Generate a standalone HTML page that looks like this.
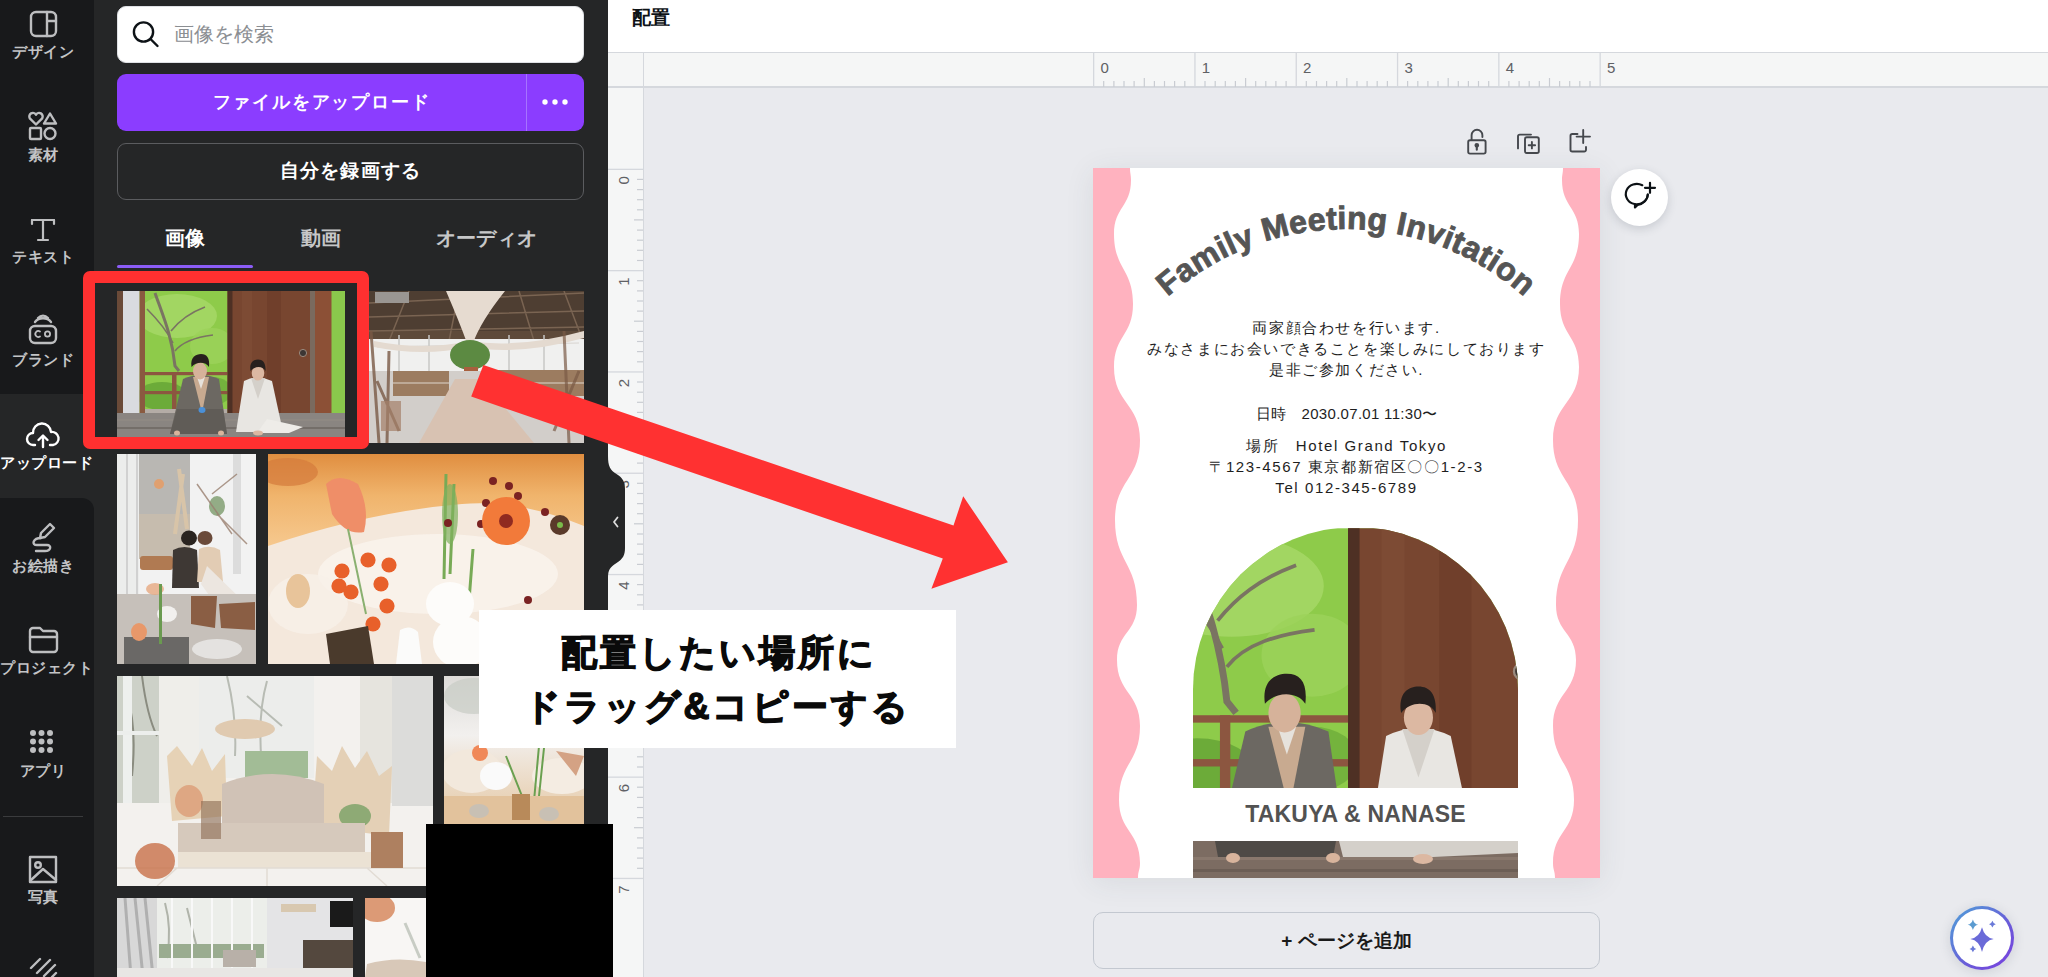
<!DOCTYPE html><html><head><meta charset="utf-8"><style>
*{margin:0;padding:0;box-sizing:border-box}
html,body{width:2048px;height:977px;overflow:hidden;background:#e9eaee;font-family:"Liberation Sans",sans-serif}
.a{position:absolute}
.nl{position:absolute;left:0;width:86px;text-align:center;color:#c3c4c6;font-size:15px;font-weight:bold;white-space:nowrap;line-height:16px;letter-spacing:0.5px}
.ph{position:absolute;overflow:hidden}
.ph div{position:absolute}
</style></head><body>
<div class="a" style="left:0;top:0;width:95px;height:977px;background:#252627"></div>
<div class="a" style="left:0;top:0;width:94px;height:394px;background:#18191b;border-bottom-right-radius:12px"></div>
<div class="a" style="left:0;top:498px;width:94px;height:479px;background:#18191b;border-top-right-radius:12px"></div>
<svg class="a" style="left:0;top:0" width="95" height="977" viewBox="0 0 95 977" fill="none" stroke="#bdbec0" stroke-width="2.4" stroke-linecap="round" stroke-linejoin="round">
<rect x="31" y="12" width="25" height="24" rx="5"/><path d="M47 12v24M47 21h9"/>
<path d="M36 124.5l-6.2-6.2a3.4 3.4 0 0 1 6.2-3.6a3.4 3.4 0 0 1 6.2 3.6z"/><path d="M50 113.5l6 10h-12z"/>
<rect x="30" y="128" width="11" height="11" rx="1"/><circle cx="50" cy="133.5" r="5.5"/>
<path d="M32 220h22M43 220v20M38 240h10" stroke-width="2.2"/><path d="M32 220v4M54 220v4" stroke-width="2.2"/>
<rect x="30" y="326" width="26" height="17" rx="5"/><path d="M35 322c4-5 12-5 16 0M38 318c3-3 7-3 10 0"/>
<path d="M40 331.5a3 3 0 1 0 0 5" stroke-width="1.8"/><circle cx="47.5" cy="334" r="2.6" stroke-width="1.8"/>
<path d="M35 445h-2a6 6 0 0 1 0-12a9 9 0 0 1 18-1a6.5 6.5 0 0 1 2 13h-3" stroke="#fff"/><path d="M43 447v-11M38.5 440l4.5-4.5l4.5 4.5" stroke="#fff"/>
<path d="M50 524l4 4-9 9-5 1 1-5z"/><path d="M41 538c-8 0-10 7-4 7h10c5 0 4 6-2 6h-9"/>
<path d="M30 631a3 3 0 0 1 3-3h7l3 3h11a3 3 0 0 1 3 3v15a3 3 0 0 1-3 3h-21a3 3 0 0 1-3-3z"/><path d="M30 637h27"/>
<path d="M30 857h26v25h-26z" stroke-width="2.4"/><circle cx="38" cy="865" r="2.8"/><path d="M31 880l12-11l13 11"/>
<path d="M31 968l9-9M37 973l13-13M44 976l11-11M52 977l4-4"/>
</svg>
<svg class="a" style="left:0;top:0" width="95" height="977"><g fill="#bdbec0"><circle cx="33.0" cy="733.0" r="3"/><circle cx="33.0" cy="741.5" r="3"/><circle cx="33.0" cy="750.0" r="3"/><circle cx="41.5" cy="733.0" r="3"/><circle cx="41.5" cy="741.5" r="3"/><circle cx="41.5" cy="750.0" r="3"/><circle cx="50.0" cy="733.0" r="3"/><circle cx="50.0" cy="741.5" r="3"/><circle cx="50.0" cy="750.0" r="3"/></g></svg>
<div class="a" style="left:3px;top:816px;width:80px;height:1px;background:#3a3b3d"></div>
<div class="nl" style="top:44px;color:#c3c4c6">デザイン</div>
<div class="nl" style="top:147px;color:#c3c4c6">素材</div>
<div class="nl" style="top:249px;color:#c3c4c6">テキスト</div>
<div class="nl" style="top:352px;color:#c3c4c6">ブランド</div>
<div class="nl" style="top:455px;color:#ffffff">アップロード</div>
<div class="nl" style="top:558px;color:#c3c4c6">お絵描き</div>
<div class="nl" style="top:660px;color:#c3c4c6">プロジェクト</div>
<div class="nl" style="top:763px;color:#c3c4c6">アプリ</div>
<div class="nl" style="top:889px;color:#c3c4c6">写真</div>
<div class="a" style="left:95px;top:0;width:513px;height:977px;background:#252627"></div>
<div class="a" style="left:117px;top:6px;width:467px;height:57px;background:#fff;border-radius:9px;border:1px solid #dfe1e5"></div>
<svg class="a" style="left:125px;top:14px" width="40" height="40" fill="none" stroke="#0d1216" stroke-width="2.4" stroke-linecap="round"><circle cx="18.5" cy="18" r="9.6"/><path d="M25.5 25l7 7"/></svg>
<div class="a" style="left:174px;top:23px;font-size:19.5px;color:#8b8e92;line-height:22px">画像を検索</div>
<div class="a" style="left:117px;top:74px;width:467px;height:57px;background:#8b3dff;border-radius:9px"></div>
<div class="a" style="left:526px;top:74px;width:1px;height:57px;background:#a673ff"></div>
<div class="a" style="left:117px;top:91px;width:409px;text-align:center;font-size:18px;font-weight:bold;color:#fff;line-height:22px;letter-spacing:1.8px">ファイルをアップロード</div>
<svg class="a" style="left:540px;top:95px" width="32" height="14" fill="#fff"><circle cx="5" cy="7" r="2.7"/><circle cx="15" cy="7" r="2.7"/><circle cx="25" cy="7" r="2.7"/></svg>
<div class="a" style="left:117px;top:143px;width:467px;height:57px;border:1px solid #5b5c5f;border-radius:9px"></div>
<div class="a" style="left:117px;top:160px;width:467px;text-align:center;font-size:19px;font-weight:bold;color:#fff;line-height:22px;letter-spacing:1.2px">自分を録画する</div>
<div class="a" style="left:117px;top:227px;width:136px;text-align:center;font-size:20px;font-weight:bold;color:#fff;line-height:22px">画像</div>
<div class="a" style="left:253px;top:227px;width:136px;text-align:center;font-size:20px;font-weight:bold;color:#c6c7c8;line-height:22px">動画</div>
<div class="a" style="left:389px;top:227px;width:195px;text-align:center;font-size:20px;font-weight:bold;color:#c6c7c8;line-height:22px;letter-spacing:0.4px">オーディオ</div>
<div class="a" style="left:117px;top:265px;width:136px;height:3px;background:#8b5cf6;border-radius:2px"></div>
<svg class="a" style="left:117px;top:291px" width="228" height="146" viewBox="0 0 228 146"><rect x="0" y="0" width="228" height="146" fill="#8ecb4a"/><ellipse cx="60" cy="25" rx="40" ry="22" fill="#a8d868" opacity=".8"/><ellipse cx="95" cy="55" rx="22" ry="18" fill="#9cd25a" opacity=".8"/><ellipse cx="45" cy="105" rx="25" ry="14" fill="#5e9c32" opacity=".7"/><ellipse cx="95" cy="100" rx="20" ry="14" fill="#6aa838" opacity=".7"/><path d="M38 2 C46 25 55 45 58 75 L62 80" stroke="#7a7462" stroke-width="3" fill="none"/><path d="M30 18 C40 28 50 40 56 52 M54 40 C62 30 72 22 88 16 M58 60 C66 50 80 46 96 44" stroke="#7a7462" stroke-width="1.6" fill="none"/><rect x="0" y="0" width="6" height="146" fill="#6a4a38"/><rect x="6" y="0" width="16.6" height="124" fill="#d9dbdf"/><rect x="22.6" y="0" width="5.4" height="124" fill="#8a5a40"/><rect x="28" y="81" width="82.5" height="3.2" fill="#8c5640"/><rect x="28" y="100" width="82.5" height="3.2" fill="#8c5640"/><rect x="55" y="81" width="4.5" height="40" fill="#8c5640"/><rect x="28" y="118" width="82.5" height="7" fill="#b4aca6"/><rect x="110.5" y="0" width="84" height="126" fill="#784630"/><rect x="125" y="0" width="10" height="126" fill="#7e4c36" opacity=".8"/><rect x="150" y="0" width="14" height="126" fill="#6a3a28" opacity=".6"/><rect x="110.5" y="0" width="5" height="126" fill="#4e3024"/><circle cx="186" cy="62" r="3.6" fill="#3c3634" stroke="#9a8a7e" stroke-width="1"/><rect x="193" y="0" width="5.4" height="126" fill="#7a6a5e"/><rect x="198" y="0" width="16.7" height="127" fill="#8c5036"/><rect x="214.7" y="0" width="13.3" height="127" fill="#8ac84c"/><rect x="0" y="122" width="228" height="24" fill="#8a8581"/><rect x="0" y="128" width="228" height="2" fill="#928c86" opacity=".6"/><rect x="0" y="136" width="228" height="2" fill="#665f5a" opacity=".6"/><path d="M66 88 Q84 80 102 88 L110 143 L53 143 Z" fill="#6c6862"/><path d="M60 118 L106 118 L110 143 L53 143 Z" fill="#605c57"/><path d="M76 86 L92 86 L85 122 Z" fill="#c8aa90"/><path d="M80 86 L88 86 L84 98 Z" fill="#e6e2dc"/><ellipse cx="85" cy="119" rx="3.5" ry="3" fill="#4a90d8"/><ellipse cx="60" cy="142" rx="3" ry="2.5" fill="#d8b49c"/><ellipse cx="104" cy="142" rx="3" ry="2.5" fill="#d8b49c"/><ellipse cx="83" cy="80" rx="7" ry="8.5" fill="#d6b29a"/><path d="M74.5 76 C73 66 79 63 84 63 C90 63 93 67 92 76 C89 71 80 70 74.5 76 Z" fill="#27201e"/><path d="M127 90 Q141 83 155 90 L166 141 L119 141 Z" fill="#e8e6e2"/><path d="M150 128 L186 136 L172 142 L140 142 Z" fill="#eeece8"/><path d="M134 87 L148 87 L141 108 Z" fill="#d4d0ca"/><ellipse cx="141" cy="142" rx="5" ry="2.5" fill="#dcb8a2"/><ellipse cx="141" cy="82" rx="6.3" ry="7.6" fill="#dcb8a2"/><path d="M133.5 80 C132 71 137 68.5 141 68.5 C146 68.5 149 72 148.5 80 C146 75 138 74.5 133.5 80 Z" fill="#27201e"/></svg>
<svg class="a" style="left:369px;top:291px" width="215" height="152" viewBox="0 0 215 152"><rect width="215" height="152" fill="#cfc9c3"/><rect width="215" height="50" fill="#4e3e32"/><rect y="40" width="215" height="12" fill="#5e4a3a"/><path d="M0 12 L215 2 M0 26 L215 20 M0 40 L215 36 M40 0 L20 50 M90 0 L80 50 M150 0 L165 50 M195 0 L212 45" stroke="#7a6452" stroke-width="1.5"/><rect x="6" y="1" width="34" height="11" fill="#9a9692"/><rect x="0" y="48" width="215" height="36" fill="#f0f0ef"/><path d="M8 56 L210 52" stroke="#d8d4d0" stroke-width="1"/><path d="M30 44 V84 M60 44 V84 M140 44 V84 M175 44 V84" stroke="#c8c8c6" stroke-width="1.5"/><path d="M77 0 L136 0 Q112 30 104 52 L98 52 Q90 30 77 0 Z" fill="#e6dbd0"/><path d="M5 50 Q55 60 100 50 Q150 58 215 40 L215 47 Q150 65 100 56 Q55 66 5 56 Z" fill="#e4dad0"/><ellipse cx="101" cy="64" rx="20" ry="15" fill="#5c8a42"/><rect x="95" y="76" width="14" height="15" fill="#a8603e"/><rect x="0" y="80" width="215" height="72" fill="#d2ceca"/><rect x="24" y="80" width="56" height="25" fill="#9c7c60"/><rect x="126" y="79" width="89" height="26" fill="#9c7c60"/><path d="M24 92 H80 M126 92 H215" stroke="#c8b8a8" stroke-width="1.5"/><path d="M86 88 L112 88 L165 152 L50 152 Z" fill="#d8c2b2"/><path d="M2 40 L10 152 M20 60 L18 152 M8 90 L30 140" stroke="#7a5a46" stroke-width="3" opacity=".8"/><path d="M195 40 L200 152 M210 80 L185 140" stroke="#7a5a46" stroke-width="3" opacity=".7"/><rect x="12" y="110" width="20" height="30" fill="#a4806a" opacity=".7"/></svg>
<svg class="a" style="left:117px;top:454px" width="139" height="210" viewBox="0 0 139 210"><rect width="139" height="210" fill="#f2f2f2"/><rect x="0" y="0" width="22" height="150" fill="#ecedec"/><path d="M10 0 V150 M20 0 V150" stroke="#c8c8c8" stroke-width="1.5"/><rect x="22" y="0" width="51" height="100" fill="#b9b7b3"/><rect x="22" y="60" width="51" height="45" fill="#c6bcae"/><rect x="116" y="0" width="8" height="120" fill="#dcdcdc"/><path d="M62 15 L70 75 M66 20 L58 80" stroke="#d8c4a8" stroke-width="4"/><ellipse cx="42" cy="30" rx="5" ry="5" fill="#e0a070"/><ellipse cx="100" cy="52" rx="8" ry="10" fill="#7a9a6a" opacity=".8"/><path d="M80 30 L115 80 M95 40 L120 20 M100 60 L130 90" stroke="#9a8070" stroke-width="1.5" opacity=".8"/><rect x="23" y="102" width="33" height="14" rx="3" fill="#b07a52"/><path d="M56 96 Q67 90 80 96 L82 134 L55 134 Z" fill="#3e3834"/><ellipse cx="72" cy="84" rx="8" ry="7.5" fill="#2a2420"/><ellipse cx="88" cy="84" rx="7.5" ry="7" fill="#6a4a3a"/><path d="M82 95 Q93 90 103 96 L106 128 L80 128 Z" fill="#e2ccb4"/><path d="M90 112 L129 150 L100 152 L84 130 Z" fill="#ece6e0"/><rect x="0" y="140" width="139" height="70" fill="#c6c0ba"/><path d="M74 142 L100 142 L98 174 L74 170 Z M102 150 L138 148 L138 176 L104 174 Z" fill="#8a5e44"/><rect x="7" y="183" width="65" height="27" fill="#6a6866"/><ellipse cx="22" cy="178" rx="8" ry="9" fill="#e8986a"/><ellipse cx="50" cy="160" rx="10" ry="8" fill="#f2f0ee"/><ellipse cx="100" cy="195" rx="25" ry="10" fill="#e4e2e0"/><ellipse cx="38" cy="135" rx="9" ry="6" fill="#e6a880" opacity=".8"/><rect x="42" y="130" width="3" height="60" fill="#6a9a50"/></svg>
<svg class="a" style="left:268px;top:454px" width="316" height="210" viewBox="0 0 316 210"><defs><linearGradient id="og" x1="0" y1="0" x2="0" y2="1"><stop offset="0" stop-color="#e08e40"/><stop offset=".45" stop-color="#f0b46c"/><stop offset="1" stop-color="#f6c88e"/></linearGradient></defs><rect width="316" height="210" fill="#f4e8dc"/><path d="M0 0 H316 V72 Q250 45 194 50 Q100 58 0 92 Z" fill="url(#og)"/><ellipse cx="20" cy="18" rx="30" ry="14" fill="#d47a3c" opacity=".7"/><ellipse cx="170" cy="120" rx="120" ry="40" fill="#faf4ee" opacity=".8"/><ellipse cx="40" cy="150" rx="40" ry="30" fill="#f8f0e8" opacity=".8"/><path d="M58 30 Q70 18 90 30 Q102 55 96 78 Q78 82 64 60 Z" fill="#ef8e68"/><path d="M80 75 L98 160" stroke="#8ab070" stroke-width="2"/><path d="M178 20 L176 125 M186 30 L182 120 M205 95 L200 160" stroke="#78aa56" stroke-width="3"/><ellipse cx="182" cy="60" rx="8" ry="30" fill="#7fb05e" opacity=".7"/><circle cx="225" cy="27" r="4" fill="#7a2222"/><circle cx="241" cy="32" r="4" fill="#7a2222"/><circle cx="250" cy="42" r="4" fill="#7a2222"/><circle cx="218" cy="49" r="4" fill="#7a2222"/><circle cx="213" cy="70" r="4" fill="#7a2222"/><circle cx="180" cy="69" r="4" fill="#7a2222"/><circle cx="277" cy="58" r="4" fill="#7a2222"/><circle cx="260" cy="146" r="4" fill="#7a2222"/><circle cx="238" cy="67" r="24" fill="#f27a3a"/><circle cx="238" cy="67" r="7" fill="#902a20"/><circle cx="292" cy="71" r="10" fill="#5a3a2a"/><circle cx="292" cy="71" r="3" fill="#7aba4a"/><circle cx="100" cy="106" r="7.6" fill="#e8602a"/><circle cx="121" cy="111" r="7.6" fill="#e8602a"/><circle cx="74" cy="117" r="7.6" fill="#e8602a"/><circle cx="71" cy="132" r="7.6" fill="#e8602a"/><circle cx="83" cy="138" r="7.6" fill="#e8602a"/><circle cx="113" cy="130" r="7.6" fill="#e8602a"/><circle cx="119" cy="152" r="7.6" fill="#e8602a"/><circle cx="105" cy="170" r="7.6" fill="#e8602a"/><ellipse cx="30" cy="137" rx="12" ry="17" fill="#e8c49a"/><path d="M58 180 L100 172 L106 210 L62 210 Z" fill="#4a3a2c"/><path d="M132 176 Q142 170 150 178 L154 210 L128 210 Z" fill="#fbfbfa"/><ellipse cx="182" cy="150" rx="24" ry="22" fill="#fdfcfa"/><ellipse cx="193" cy="188" rx="28" ry="26" fill="#fdfcfa"/></svg>
<svg class="a" style="left:117px;top:676px" width="316" height="210" viewBox="0 0 316 210"><rect width="316" height="210" fill="#f3f1ee"/><rect x="0" y="0" width="42" height="127" fill="#cdd1c8"/><path d="M25 0 Q30 40 40 60 M10 20 Q20 50 15 100" stroke="#8a8c80" stroke-width="2" fill="none"/><rect x="6" y="0" width="9" height="127" fill="#eef0ee"/><rect x="0" y="55" width="42" height="4" fill="#eceeec"/><rect x="42" y="0" width="40" height="127" fill="#efeeea"/><rect x="82" y="0" width="115" height="102" fill="#ecedeb"/><path d="M110 0 Q120 40 118 80 M150 5 Q140 40 145 90 M130 20 L165 50" stroke="#b8bcb4" stroke-width="2" fill="none"/><rect x="128" y="75" width="63" height="27" fill="#a2bc96"/><rect x="243" y="0" width="32" height="127" fill="#e6e4de"/><rect x="275" y="0" width="41" height="130" fill="#dcdcda"/><ellipse cx="128" cy="53" rx="30" ry="10" fill="#e0cab0"/><path d="M50 80 L60 70 L75 90 L85 72 L95 95 L108 78 L110 140 L55 145 Z" fill="#e6d2b6"/><ellipse cx="72" cy="125" rx="14" ry="16" fill="#d88a60" opacity=".6"/><path d="M195 150 L200 80 L215 95 L225 70 L238 92 L250 75 L262 100 L275 90 L272 160 Z" fill="#e4d0b6"/><ellipse cx="238" cy="140" rx="16" ry="12" fill="#6a9a5a" opacity=".7"/><path d="M105 108 Q155 88 207 108 L207 147 L105 147 Z" fill="#d0c2b6"/><rect x="61" y="147" width="187" height="29" fill="#d6c9bc"/><rect x="61" y="176" width="200" height="16" fill="#ebe2d4"/><path d="M0 192 H316 M60 192 L40 210 M150 192 L150 210 M250 192 L270 210" stroke="#e2dcd4" stroke-width="1.5"/><ellipse cx="38" cy="185" rx="20" ry="18" fill="#c87048" opacity=".8"/><rect x="254" y="156" width="32" height="36" fill="#ae8060"/><rect x="84" y="125" width="20" height="38" fill="#8a6a52" opacity=".6"/></svg>
<svg class="a" style="left:444px;top:676px" width="140" height="148" viewBox="0 0 140 148"><defs><linearGradient id="g6" x1="0" y1="0" x2="0" y2="1"><stop offset="0" stop-color="#dddbd8"/><stop offset=".4" stop-color="#f2f0ee"/><stop offset=".6" stop-color="#eee2d4"/><stop offset="1" stop-color="#e4c8a4"/></linearGradient></defs><rect width="140" height="148" fill="url(#g6)"/><ellipse cx="30" cy="20" rx="30" ry="18" fill="#c8ccc4" opacity=".7"/><ellipse cx="28" cy="95" rx="30" ry="22" fill="#f2e8dc"/><ellipse cx="118" cy="100" rx="30" ry="18" fill="#f4ece2"/><path d="M112 75 L140 80 L132 100 Z" fill="#d4a284"/><circle cx="36" cy="77" r="8" fill="#f08858"/><ellipse cx="52" cy="100" rx="16" ry="14" fill="#fafafa"/><path d="M62 80 L78 120 M95 70 L90 125 M100 72 L95 120" stroke="#6aa050" stroke-width="2"/><rect x="0" y="120" width="140" height="28" fill="#e2c29c"/><rect x="68" y="118" width="18" height="26" fill="#b88a5a"/><ellipse cx="35" cy="135" rx="10" ry="7" fill="#c8c0b4"/><ellipse cx="105" cy="138" rx="10" ry="7" fill="#c8c0b4"/></svg>
<svg class="a" style="left:117px;top:898px" width="236" height="79" viewBox="0 0 236 79"><rect width="236" height="79" fill="#f2f2f2"/><rect x="0" y="0" width="40" height="79" fill="#d8d8d8"/><path d="M8 0 L14 79 M18 0 L26 79 M28 0 L36 79" stroke="#b0b0b0" stroke-width="3"/><rect x="40" y="0" width="110" height="79" fill="#eceeea"/><path d="M48 5 Q55 30 50 60 M70 10 L80 50" stroke="#b0b4aa" stroke-width="2" fill="none"/><rect x="42" y="46" width="105" height="14" fill="#9aac90"/><path d="M55 0 V79 M75 0 V79 M95 0 V79 M115 0 V79 M135 0 V79" stroke="#f8f8f8" stroke-width="2"/><rect x="150" y="0" width="86" height="79" fill="#e4e4e6"/><rect x="213" y="3" width="23" height="26" fill="#1a1a1a"/><rect x="164" y="6" width="35" height="8" fill="#d8c8b0"/><rect x="186" y="42" width="50" height="30" fill="#54483e"/><rect x="106" y="52" width="33" height="17" fill="#b8b0a8"/><rect x="0" y="70" width="236" height="9" fill="#e8e6e4"/></svg>
<svg class="a" style="left:365px;top:898px" width="61" height="79" viewBox="0 0 61 79"><rect width="61" height="79" fill="#f8f6f4"/><ellipse cx="12" cy="10" rx="18" ry="14" fill="#dc9a76"/><path d="M40 25 L55 60" stroke="#c8ccc4" stroke-width="3"/><path d="M0 79 L2 66 Q30 58 61 64 L61 79 Z" fill="#d8c8b8"/></svg>
<div class="a" style="left:83px;top:271px;width:286px;height:178px;border:12px solid #ff3030;border-radius:7px"></div>
<div class="a" style="left:608px;top:0;width:1440px;height:52px;background:#fff"></div>
<div class="a" style="left:632px;top:6px;font-size:19px;font-weight:bold;color:#0d1216;line-height:24px">配置</div>
<div class="a" style="left:608px;top:52px;width:1440px;height:36px;background:#f5f6f6;border-top:1px solid #d5d8dd;border-bottom:2px solid #d5d8dd"></div>
<div class="a" style="left:608px;top:88px;width:36px;height:889px;background:#f5f6f6;border-right:1px solid #d5d8dd"></div>
<div class="a" style="left:643px;top:52px;width:1px;height:36px;background:#d5d8dd"></div>
<svg class="a" style="left:0;top:0" width="2048" height="977" fill="none"><rect x="1093.0" y="52" width="1.3" height="36" fill="#d5d8dd"/><text x="1100.5" y="73" font-family="Liberation Sans" font-size="15" fill="#5f6165">0</text><rect x="1103.1" y="81" width="1.2" height="6" fill="#c9ccd2"/><rect x="1113.3" y="81" width="1.2" height="6" fill="#c9ccd2"/><rect x="1123.4" y="81" width="1.2" height="6" fill="#c9ccd2"/><rect x="1133.5" y="81" width="1.2" height="6" fill="#c9ccd2"/><rect x="1143.7" y="78" width="1.2" height="9" fill="#c9ccd2"/><rect x="1153.8" y="81" width="1.2" height="6" fill="#c9ccd2"/><rect x="1163.9" y="81" width="1.2" height="6" fill="#c9ccd2"/><rect x="1174.0" y="81" width="1.2" height="6" fill="#c9ccd2"/><rect x="1184.2" y="81" width="1.2" height="6" fill="#c9ccd2"/><rect x="1194.3" y="52" width="1.3" height="36" fill="#d5d8dd"/><text x="1201.8" y="73" font-family="Liberation Sans" font-size="15" fill="#5f6165">1</text><rect x="1204.4" y="81" width="1.2" height="6" fill="#c9ccd2"/><rect x="1214.6" y="81" width="1.2" height="6" fill="#c9ccd2"/><rect x="1224.7" y="81" width="1.2" height="6" fill="#c9ccd2"/><rect x="1234.8" y="81" width="1.2" height="6" fill="#c9ccd2"/><rect x="1245.0" y="78" width="1.2" height="9" fill="#c9ccd2"/><rect x="1255.1" y="81" width="1.2" height="6" fill="#c9ccd2"/><rect x="1265.2" y="81" width="1.2" height="6" fill="#c9ccd2"/><rect x="1275.3" y="81" width="1.2" height="6" fill="#c9ccd2"/><rect x="1285.5" y="81" width="1.2" height="6" fill="#c9ccd2"/><rect x="1295.6" y="52" width="1.3" height="36" fill="#d5d8dd"/><text x="1303.1" y="73" font-family="Liberation Sans" font-size="15" fill="#5f6165">2</text><rect x="1305.7" y="81" width="1.2" height="6" fill="#c9ccd2"/><rect x="1315.9" y="81" width="1.2" height="6" fill="#c9ccd2"/><rect x="1326.0" y="81" width="1.2" height="6" fill="#c9ccd2"/><rect x="1336.1" y="81" width="1.2" height="6" fill="#c9ccd2"/><rect x="1346.2" y="78" width="1.2" height="9" fill="#c9ccd2"/><rect x="1356.4" y="81" width="1.2" height="6" fill="#c9ccd2"/><rect x="1366.5" y="81" width="1.2" height="6" fill="#c9ccd2"/><rect x="1376.6" y="81" width="1.2" height="6" fill="#c9ccd2"/><rect x="1386.8" y="81" width="1.2" height="6" fill="#c9ccd2"/><rect x="1396.9" y="52" width="1.3" height="36" fill="#d5d8dd"/><text x="1404.4" y="73" font-family="Liberation Sans" font-size="15" fill="#5f6165">3</text><rect x="1407.0" y="81" width="1.2" height="6" fill="#c9ccd2"/><rect x="1417.2" y="81" width="1.2" height="6" fill="#c9ccd2"/><rect x="1427.3" y="81" width="1.2" height="6" fill="#c9ccd2"/><rect x="1437.4" y="81" width="1.2" height="6" fill="#c9ccd2"/><rect x="1447.6" y="78" width="1.2" height="9" fill="#c9ccd2"/><rect x="1457.7" y="81" width="1.2" height="6" fill="#c9ccd2"/><rect x="1467.8" y="81" width="1.2" height="6" fill="#c9ccd2"/><rect x="1477.9" y="81" width="1.2" height="6" fill="#c9ccd2"/><rect x="1488.1" y="81" width="1.2" height="6" fill="#c9ccd2"/><rect x="1498.2" y="52" width="1.3" height="36" fill="#d5d8dd"/><text x="1505.7" y="73" font-family="Liberation Sans" font-size="15" fill="#5f6165">4</text><rect x="1508.3" y="81" width="1.2" height="6" fill="#c9ccd2"/><rect x="1518.5" y="81" width="1.2" height="6" fill="#c9ccd2"/><rect x="1528.6" y="81" width="1.2" height="6" fill="#c9ccd2"/><rect x="1538.7" y="81" width="1.2" height="6" fill="#c9ccd2"/><rect x="1548.9" y="78" width="1.2" height="9" fill="#c9ccd2"/><rect x="1559.0" y="81" width="1.2" height="6" fill="#c9ccd2"/><rect x="1569.1" y="81" width="1.2" height="6" fill="#c9ccd2"/><rect x="1579.2" y="81" width="1.2" height="6" fill="#c9ccd2"/><rect x="1589.4" y="81" width="1.2" height="6" fill="#c9ccd2"/><rect x="1599.5" y="52" width="1.3" height="36" fill="#d5d8dd"/><text x="1607.0" y="73" font-family="Liberation Sans" font-size="15" fill="#5f6165">5</text><rect x="608" y="168.7" width="36" height="1.3" fill="#d5d8dd"/><text transform="translate(629 176.2) rotate(-90)" text-anchor="end" font-family="Liberation Sans" font-size="15" fill="#5f6165">0</text><rect x="637" y="178.8" width="6" height="1.2" fill="#c9ccd2"/><rect x="637" y="189.0" width="6" height="1.2" fill="#c9ccd2"/><rect x="637" y="199.1" width="6" height="1.2" fill="#c9ccd2"/><rect x="637" y="209.2" width="6" height="1.2" fill="#c9ccd2"/><rect x="634" y="219.3" width="9" height="1.2" fill="#c9ccd2"/><rect x="637" y="229.5" width="6" height="1.2" fill="#c9ccd2"/><rect x="637" y="239.6" width="6" height="1.2" fill="#c9ccd2"/><rect x="637" y="249.7" width="6" height="1.2" fill="#c9ccd2"/><rect x="637" y="259.9" width="6" height="1.2" fill="#c9ccd2"/><rect x="608" y="270.0" width="36" height="1.3" fill="#d5d8dd"/><text transform="translate(629 277.5) rotate(-90)" text-anchor="end" font-family="Liberation Sans" font-size="15" fill="#5f6165">1</text><rect x="637" y="280.1" width="6" height="1.2" fill="#c9ccd2"/><rect x="637" y="290.3" width="6" height="1.2" fill="#c9ccd2"/><rect x="637" y="300.4" width="6" height="1.2" fill="#c9ccd2"/><rect x="637" y="310.5" width="6" height="1.2" fill="#c9ccd2"/><rect x="634" y="320.6" width="9" height="1.2" fill="#c9ccd2"/><rect x="637" y="330.8" width="6" height="1.2" fill="#c9ccd2"/><rect x="637" y="340.9" width="6" height="1.2" fill="#c9ccd2"/><rect x="637" y="351.0" width="6" height="1.2" fill="#c9ccd2"/><rect x="637" y="361.2" width="6" height="1.2" fill="#c9ccd2"/><rect x="608" y="371.3" width="36" height="1.3" fill="#d5d8dd"/><text transform="translate(629 378.8) rotate(-90)" text-anchor="end" font-family="Liberation Sans" font-size="15" fill="#5f6165">2</text><rect x="637" y="381.4" width="6" height="1.2" fill="#c9ccd2"/><rect x="637" y="391.6" width="6" height="1.2" fill="#c9ccd2"/><rect x="637" y="401.7" width="6" height="1.2" fill="#c9ccd2"/><rect x="637" y="411.8" width="6" height="1.2" fill="#c9ccd2"/><rect x="634" y="421.9" width="9" height="1.2" fill="#c9ccd2"/><rect x="637" y="432.1" width="6" height="1.2" fill="#c9ccd2"/><rect x="637" y="442.2" width="6" height="1.2" fill="#c9ccd2"/><rect x="637" y="452.3" width="6" height="1.2" fill="#c9ccd2"/><rect x="637" y="462.5" width="6" height="1.2" fill="#c9ccd2"/><rect x="608" y="472.6" width="36" height="1.3" fill="#d5d8dd"/><text transform="translate(629 480.1) rotate(-90)" text-anchor="end" font-family="Liberation Sans" font-size="15" fill="#5f6165">3</text><rect x="637" y="482.7" width="6" height="1.2" fill="#c9ccd2"/><rect x="637" y="492.9" width="6" height="1.2" fill="#c9ccd2"/><rect x="637" y="503.0" width="6" height="1.2" fill="#c9ccd2"/><rect x="637" y="513.1" width="6" height="1.2" fill="#c9ccd2"/><rect x="634" y="523.2" width="9" height="1.2" fill="#c9ccd2"/><rect x="637" y="533.4" width="6" height="1.2" fill="#c9ccd2"/><rect x="637" y="543.5" width="6" height="1.2" fill="#c9ccd2"/><rect x="637" y="553.6" width="6" height="1.2" fill="#c9ccd2"/><rect x="637" y="563.8" width="6" height="1.2" fill="#c9ccd2"/><rect x="608" y="573.9" width="36" height="1.3" fill="#d5d8dd"/><text transform="translate(629 581.4) rotate(-90)" text-anchor="end" font-family="Liberation Sans" font-size="15" fill="#5f6165">4</text><rect x="637" y="584.0" width="6" height="1.2" fill="#c9ccd2"/><rect x="637" y="594.2" width="6" height="1.2" fill="#c9ccd2"/><rect x="637" y="604.3" width="6" height="1.2" fill="#c9ccd2"/><rect x="637" y="614.4" width="6" height="1.2" fill="#c9ccd2"/><rect x="634" y="624.5" width="9" height="1.2" fill="#c9ccd2"/><rect x="637" y="634.7" width="6" height="1.2" fill="#c9ccd2"/><rect x="637" y="644.8" width="6" height="1.2" fill="#c9ccd2"/><rect x="637" y="654.9" width="6" height="1.2" fill="#c9ccd2"/><rect x="637" y="665.1" width="6" height="1.2" fill="#c9ccd2"/><rect x="608" y="675.2" width="36" height="1.3" fill="#d5d8dd"/><text transform="translate(629 682.7) rotate(-90)" text-anchor="end" font-family="Liberation Sans" font-size="15" fill="#5f6165">5</text><rect x="637" y="685.3" width="6" height="1.2" fill="#c9ccd2"/><rect x="637" y="695.5" width="6" height="1.2" fill="#c9ccd2"/><rect x="637" y="705.6" width="6" height="1.2" fill="#c9ccd2"/><rect x="637" y="715.7" width="6" height="1.2" fill="#c9ccd2"/><rect x="634" y="725.9" width="9" height="1.2" fill="#c9ccd2"/><rect x="637" y="736.0" width="6" height="1.2" fill="#c9ccd2"/><rect x="637" y="746.1" width="6" height="1.2" fill="#c9ccd2"/><rect x="637" y="756.2" width="6" height="1.2" fill="#c9ccd2"/><rect x="637" y="766.4" width="6" height="1.2" fill="#c9ccd2"/><rect x="608" y="776.5" width="36" height="1.3" fill="#d5d8dd"/><text transform="translate(629 784.0) rotate(-90)" text-anchor="end" font-family="Liberation Sans" font-size="15" fill="#5f6165">6</text><rect x="637" y="786.6" width="6" height="1.2" fill="#c9ccd2"/><rect x="637" y="796.8" width="6" height="1.2" fill="#c9ccd2"/><rect x="637" y="806.9" width="6" height="1.2" fill="#c9ccd2"/><rect x="637" y="817.0" width="6" height="1.2" fill="#c9ccd2"/><rect x="634" y="827.1" width="9" height="1.2" fill="#c9ccd2"/><rect x="637" y="837.3" width="6" height="1.2" fill="#c9ccd2"/><rect x="637" y="847.4" width="6" height="1.2" fill="#c9ccd2"/><rect x="637" y="857.5" width="6" height="1.2" fill="#c9ccd2"/><rect x="637" y="867.7" width="6" height="1.2" fill="#c9ccd2"/><rect x="608" y="877.8" width="36" height="1.3" fill="#d5d8dd"/><text transform="translate(629 885.3) rotate(-90)" text-anchor="end" font-family="Liberation Sans" font-size="15" fill="#5f6165">7</text></svg>
<svg class="a" style="left:600px;top:456px" width="40" height="122"><path d="M8 0 C8 10 10 14 16.5 18 C23 22 25 26 25 33 L25 92 C25 99 23 103 16.5 107 C10 111 8 114 8 122 Z" fill="#252627"/><path d="M17.5 61.5l-3.5 4.5l3.5 4.5" stroke="#ddd" stroke-width="1.8" fill="none" stroke-linecap="round" stroke-linejoin="round"/></svg>
<div class="a" style="left:1093px;top:168px;width:507px;height:710px;background:#fff;box-shadow:0 4px 28px rgba(60,64,80,.09)"></div>
<svg class="a" style="left:0;top:0" width="2048" height="977"><path d="M1093 168 L1130 168 C1130 174.0 1131 174.0 1131 180 C1131 207.0 1114 207.0 1114 234 C1114 269.0 1133 269.0 1133 304 C1133 335.5 1114 335.5 1114 367 C1114 403.5 1140 403.5 1140 440 C1140 480.0 1115 480.0 1115 520 C1115 562.5 1137 562.5 1137 605 C1137 632.5 1117 632.5 1117 660 C1117 693.0 1140 693.0 1140 726 C1140 763.0 1119 763.0 1119 800 C1119 831.5 1140 831.5 1140 863 C1140 870.5 1138 870.5 1138 878 L1093 878 Z" fill="#ffb2bf"/><path d="M1600.0 168 L1563.0 168 C1563.0 174.0 1562.0 174.0 1562.0 180 C1562.0 207.0 1579.0 207.0 1579.0 234 C1579.0 269.0 1560.0 269.0 1560.0 304 C1560.0 335.5 1579.0 335.5 1579.0 367 C1579.0 403.5 1553.0 403.5 1553.0 440 C1553.0 480.0 1578.0 480.0 1578.0 520 C1578.0 562.5 1556.0 562.5 1556.0 605 C1556.0 632.5 1576.0 632.5 1576.0 660 C1576.0 693.0 1553.0 693.0 1553.0 726 C1553.0 763.0 1574.0 763.0 1574.0 800 C1574.0 831.5 1553.0 831.5 1553.0 863 C1553.0 870.5 1555.0 870.5 1555.0 878 L1600.0 878 Z" fill="#ffb2bf"/></svg>
<svg class="a" style="left:0;top:0" width="2048" height="977"><defs><path id="arc" d="M1346 497 m-268 0 a268 268 0 0 1 536 0"/></defs><text font-family="Liberation Sans" font-weight="bold" font-size="32" fill="#555555" stroke="#555555" stroke-width="0.9" letter-spacing="0.3" text-anchor="middle"><textPath href="#arc" startOffset="50%">Family Meeting Invitation</textPath></text></svg>
<div style="position:absolute;left:1093px;width:507px;text-align:center;color:#1e1e1e;font-size:15px;line-height:21px;white-space:nowrap;top:317px;letter-spacing:1.6px">両家顔合わせを行います.<br>みなさまにお会いできることを楽しみにしております<br>是非ご参加ください.</div>
<div style="position:absolute;left:1093px;width:507px;text-align:center;color:#1e1e1e;font-size:15px;line-height:21px;white-space:nowrap;top:403px;letter-spacing:0.3px">日時　2030.07.01 11:30〜</div>
<div style="position:absolute;left:1093px;width:507px;text-align:center;color:#1e1e1e;font-size:15px;line-height:21px;white-space:nowrap;top:435px;letter-spacing:1.6px">場所　Hotel Grand Tokyo<br>〒123-4567 東京都新宿区〇〇1-2-3<br>Tel 012-345-6789</div>
<svg class="a" style="left:1193px;top:527px" width="325" height="351" viewBox="0 0 325 351"><defs><clipPath id="ac"><path d="M0 162.5 A162.5 162.5 0 0 1 325 162.5 L325 351 L0 351 Z"/></clipPath></defs><g clip-path="url(#ac)"><g transform="translate(-100 1.3) scale(2.308)"><rect x="0" y="0" width="228" height="146" fill="#8ecb4a"/><ellipse cx="60" cy="25" rx="40" ry="22" fill="#a8d868" opacity=".8"/><ellipse cx="95" cy="55" rx="22" ry="18" fill="#9cd25a" opacity=".8"/><ellipse cx="45" cy="105" rx="25" ry="14" fill="#5e9c32" opacity=".7"/><ellipse cx="95" cy="100" rx="20" ry="14" fill="#6aa838" opacity=".7"/><path d="M38 2 C46 25 55 45 58 75 L62 80" stroke="#7a7462" stroke-width="3" fill="none"/><path d="M30 18 C40 28 50 40 56 52 M54 40 C62 30 72 22 88 16 M58 60 C66 50 80 46 96 44" stroke="#7a7462" stroke-width="1.6" fill="none"/><rect x="0" y="0" width="6" height="146" fill="#6a4a38"/><rect x="6" y="0" width="16.6" height="124" fill="#d9dbdf"/><rect x="22.6" y="0" width="5.4" height="124" fill="#8a5a40"/><rect x="28" y="81" width="82.5" height="3.2" fill="#8c5640"/><rect x="28" y="100" width="82.5" height="3.2" fill="#8c5640"/><rect x="55" y="81" width="4.5" height="40" fill="#8c5640"/><rect x="28" y="118" width="82.5" height="7" fill="#b4aca6"/><rect x="110.5" y="0" width="84" height="126" fill="#784630"/><rect x="125" y="0" width="10" height="126" fill="#7e4c36" opacity=".8"/><rect x="150" y="0" width="14" height="126" fill="#6a3a28" opacity=".6"/><rect x="110.5" y="0" width="5" height="126" fill="#4e3024"/><circle cx="186" cy="62" r="3.6" fill="#3c3634" stroke="#9a8a7e" stroke-width="1"/><rect x="193" y="0" width="5.4" height="126" fill="#7a6a5e"/><rect x="198" y="0" width="16.7" height="127" fill="#8c5036"/><rect x="214.7" y="0" width="13.3" height="127" fill="#8ac84c"/><rect x="0" y="122" width="228" height="24" fill="#8a8581"/><rect x="0" y="128" width="228" height="2" fill="#928c86" opacity=".6"/><rect x="0" y="136" width="228" height="2" fill="#665f5a" opacity=".6"/><path d="M66 88 Q84 80 102 88 L110 143 L53 143 Z" fill="#6c6862"/><path d="M60 118 L106 118 L110 143 L53 143 Z" fill="#605c57"/><path d="M76 86 L92 86 L85 122 Z" fill="#c8aa90"/><path d="M80 86 L88 86 L84 98 Z" fill="#e6e2dc"/><ellipse cx="85" cy="119" rx="3.5" ry="3" fill="#4a90d8"/><ellipse cx="60" cy="142" rx="3" ry="2.5" fill="#d8b49c"/><ellipse cx="104" cy="142" rx="3" ry="2.5" fill="#d8b49c"/><ellipse cx="83" cy="80" rx="7" ry="8.5" fill="#d6b29a"/><path d="M74.5 76 C73 66 79 63 84 63 C90 63 93 67 92 76 C89 71 80 70 74.5 76 Z" fill="#27201e"/><path d="M127 90 Q141 83 155 90 L166 141 L119 141 Z" fill="#e8e6e2"/><path d="M150 128 L186 136 L172 142 L140 142 Z" fill="#eeece8"/><path d="M134 87 L148 87 L141 108 Z" fill="#d4d0ca"/><ellipse cx="141" cy="142" rx="5" ry="2.5" fill="#dcb8a2"/><ellipse cx="141" cy="82" rx="6.3" ry="7.6" fill="#dcb8a2"/><path d="M133.5 80 C132 71 137 68.5 141 68.5 C146 68.5 149 72 148.5 80 C146 75 138 74.5 133.5 80 Z" fill="#27201e"/></g><rect x="0" y="261" width="325" height="53" fill="#fff"/><rect x="0" y="314" width="325" height="37" fill="#7c6c62"/><rect x="0" y="330" width="325" height="3" fill="#8e7e72" opacity=".7"/><rect x="0" y="342" width="325" height="3" fill="#655850" opacity=".7"/><path d="M22 314 L143 314 L140 330 L25 330 Z" fill="#4e4a46"/><path d="M146 314 L325 314 L325 326 L240 330 L150 330 Z" fill="#d4d0ca"/><ellipse cx="40" cy="331" rx="7" ry="5" fill="#d8b49c"/><ellipse cx="140" cy="331" rx="7" ry="5" fill="#d8b49c"/><ellipse cx="230" cy="332" rx="10" ry="5" fill="#dcb8a2"/></g></svg>
<div class="a" style="left:1193px;top:801px;width:325px;text-align:center;font-size:23px;font-weight:bold;color:#525252;letter-spacing:0.2px;line-height:26px">TAKUYA &amp; NANASE</div>
<svg class="a" style="left:1460px;top:126px" width="140" height="32" fill="none" stroke="#45484d" stroke-width="1.9" stroke-linecap="round" stroke-linejoin="round"><rect x="8.2" y="14.2" width="17.4" height="13.4" rx="1.8"/><path d="M11.6 14V9.2a5.4 5.4 0 0 1 10.8 0V11"/><path d="M16.8 19.5v4.2" stroke-width="2.1"/><circle cx="16.8" cy="19.3" r="1.4" fill="#45484d"/><path d="M58 22.4V10.4a1.8 1.8 0 0 1 1.8-1.8H71"/><rect x="65" y="11.2" width="13.8" height="15.8" rx="1.8"/><path d="M71.9 16v6.4M68.7 19.2h6.4"/><path d="M117.5 8H112.3a1.8 1.8 0 0 0-1.8 1.8V23.7a1.8 1.8 0 0 0 1.8 1.8H124.2a1.8 1.8 0 0 0 1.8-1.8V21"/><path d="M123.2 4v13M116.6 10.6h13.4"/></svg>
<div class="a" style="left:1611px;top:169px;width:57px;height:57px;border-radius:50%;background:#fff;box-shadow:0 3px 10px rgba(50,60,80,.18)"></div>
<svg class="a" style="left:1611px;top:169px" width="57" height="57" fill="none" stroke="#0d1216" stroke-width="2.2" stroke-linecap="round" stroke-linejoin="round"><path d="M36.8 25.5a11 10.2 0 1 1-5.5-9.3"/><path d="M36.8 25.5c0 5-4.5 9.5-10 10.3l-2.8 2.6v-3"/><path d="M39 13.8v10M34 18.8h10"/></svg>
<div class="a" style="left:1093px;top:912px;width:507px;height:57px;border:1.5px solid #c3c8d0;border-radius:10px"></div>
<div class="a" style="left:1093px;top:929px;width:507px;text-align:center;font-size:19px;font-weight:bold;color:#1a1a1a;line-height:24px">+ ページを追加</div>
<div class="a" style="left:1950px;top:906px;width:64px;height:64px;border-radius:50%;background:linear-gradient(135deg,#4ea3d8,#6a5ad8 60%,#7a3ee0);box-shadow:0 2px 12px rgba(50,60,80,.15)"></div>
<div class="a" style="left:1953px;top:909px;width:58px;height:58px;border-radius:50%;background:#fff"></div>
<svg class="a" style="left:1950px;top:906px" width="64" height="64"><g transform="translate(32 33) scale(1.3) translate(-32 -33)"><path d="M32 24q2 8 9 9q-7 1-9 10q-2-9-9-10q7-1 9-9z" fill="#6a6ad8"/><path d="M25 18q1 3.5 4 4q-3 .5-4 4q-1-3.5-4-4q3-.5 4-4z" fill="#5b9bd0"/><path d="M40 19q.7 2.3 2.6 2.6q-1.9.4-2.6 2.6q-.7-2.2-2.6-2.6q1.9-.3 2.6-2.6z" fill="#6a7ad8"/><path d="M25 38q.7 2.3 2.6 2.6q-1.9.4-2.6 2.6q-.7-2.2-2.6-2.6q1.9-.3 2.6-2.6z" fill="#6a7ad8"/></g></svg>
<svg class="a" style="left:0;top:0" width="2048" height="977"><polygon points="483.4,364.9 953.5,525.5 963.2,496.3 1007.9,562.3 931.4,588.7 942.8,558.6 471.2,396.6" fill="#ff3131"/></svg>
<div class="a" style="left:479px;top:610px;width:477px;height:138px;background:#fff"></div>
<div class="a" style="left:479px;top:626px;width:477px;text-align:center;font-size:36px;font-weight:bold;color:#0a0a0a;line-height:54px;letter-spacing:3px;text-indent:3px;-webkit-text-stroke:1.3px #0a0a0a">配置したい場所に<br>ドラッグ&amp;コピーする</div>
<div class="a" style="left:426px;top:824px;width:187px;height:153px;background:#000"></div>
</body></html>
